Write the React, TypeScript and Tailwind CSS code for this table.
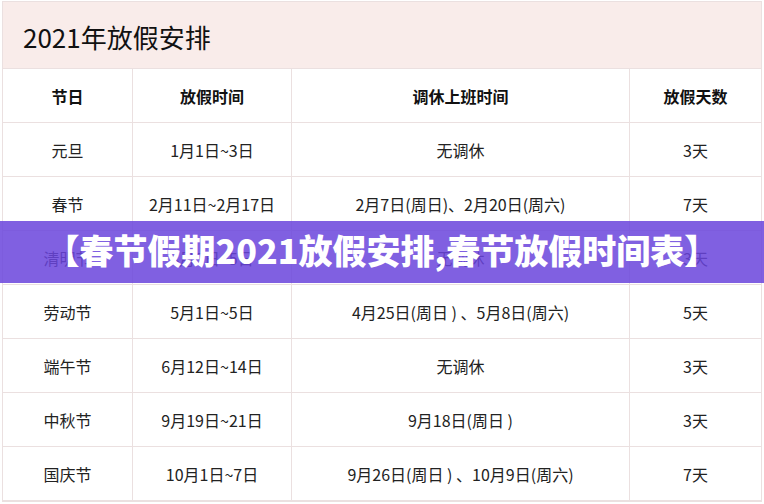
const rows: [string, string, string, string][] = [
    ["元旦", "1月1日~3日", "无调休", "3天"],
    ["春节", "2月11日~2月17日", "2月7日(周日)、2月20日(周六)", "7天"],
    ["清明节", "4月3日~5日", "无调休", "3天"],
    ["劳动节", "5月1日~5日", "4月25日(周日 ) 、5月8日(周六)", "5天"],
    ["端午节", "6月12日~14日", "无调休", "3天"],
    ["中秋节", "9月19日~21日", "9月18日(周日 )", "3天"],
    ["国庆节", "10月1日~7日", "9月26日(周日 ) 、10月9日(周六)", "7天"],
];

const headers = ["节日", "放假时间", "调休上班时间", "放假天数"];

export default function App()
{
    return (
        <div className="relative w-[764px] h-[504px] overflow-hidden bg-white font-['Noto_Sans_CJK_SC','Noto_Sans',sans-serif]">
            <div className="ml-[2px] mt-[1px] w-[760px] border border-[#ebe0e0]">
                {/* 标题 */ }
                <div className="h-[67px] flex items-center pl-[20px] pt-[3px] bg-[#f9ecea] border-b border-[#ebe0e0]">
                    <span className="text-[26px] text-[#111] leading-none">2021年放假安排</span>
                </div>

                <div className="grid grid-cols-[130px_159px_338px_1fr]">
                    { headers.map( ( h, i ) => (
                        <div
                            key={ h }
                            className={ `h-[54px] flex items-center justify-center border-b border-[#ebe0e0] text-[16px] font-bold text-[#111] ${ i < 3 ? "border-r" : "" }` }
                        >
                            { h }
                        </div>
                    ) ) }

                    { rows.map( ( r ) =>
                        r.map( ( c, i ) => (
                            <div
                                key={ r[0] + i }
                                className={ `h-[54px] flex items-center justify-center border-b border-[#ebe0e0] text-[16px] text-[#222] ${ i < 3 ? "border-r" : "" }` }
                            >
                                { c }
                            </div>
                        ) )
                    ) }
                </div>
            </div>

            {/* 横幅 */ }
            <div className="absolute left-0 top-[221px] w-full h-[62px] bg-[#6a44dc]/85 flex items-center justify-center pb-[4px]">
                <span className="text-white text-[34px] font-black leading-none">
                    【春节假期2021放假安排,春节放假时间表】
                </span>
            </div>
        </div>
    );
}
